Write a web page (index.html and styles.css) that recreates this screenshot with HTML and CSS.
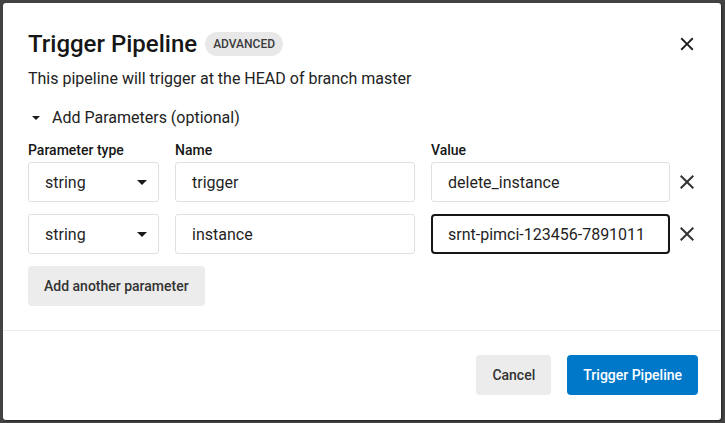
FILE: index.html
```html
<!DOCTYPE html>
<html lang="en">
<head>
<meta charset="utf-8">
<title>Trigger Pipeline</title>
<link rel="stylesheet" href="styles.css">
</head>
<body>
<div class="dialog">
  <div class="dialog-body">
    <div class="header">
      <div class="title-wrap">
        <h2 class="title">Trigger Pipeline</h2>
        <span class="badge">ADVANCED</span>
      </div>
      <button class="icon-btn close" aria-label="Close">
        <svg viewBox="0 0 24 24" width="22" height="22"><path d="M19 6.41 17.59 5 12 10.59 6.41 5 5 6.41 10.59 12 5 17.59 6.41 19 12 13.41 17.59 19 19 17.59 13.41 12z" fill="#1a1a1a"/></svg>
      </button>
    </div>
    <p class="subtitle">This pipeline will trigger at the HEAD of branch master</p>
    <div class="toggle">
      <svg class="caret" viewBox="7 10 10 5" width="8" height="4"><path d="M7 10l5 5 5-5z" fill="#1a1a1a"/></svg>
      <span>Add Parameters (optional)</span>
    </div>
    <div class="params">
      <div class="label">Parameter type</div>
      <div class="label">Name</div>
      <div class="label">Value</div>

      <div class="select">
        <span>string</span>
        <svg viewBox="0 0 24 24" width="24" height="24"><path d="M7 10l5 5 5-5z" fill="#1a1a1a"/></svg>
      </div>
      <div class="input">trigger</div>
      <div class="value-cell">
        <div class="input">delete_instance</div>
        <button class="icon-btn remove" aria-label="Remove">
          <svg viewBox="0 0 24 24" width="24" height="24"><path d="M19 6.41 17.59 5 12 10.59 6.41 5 5 6.41 10.59 12 5 17.59 6.41 19 12 13.41 17.59 19 19 17.59 13.41 12z" fill="#333"/></svg>
        </button>
      </div>

      <div class="select">
        <span>string</span>
        <svg viewBox="0 0 24 24" width="24" height="24"><path d="M7 10l5 5 5-5z" fill="#1a1a1a"/></svg>
      </div>
      <div class="input">instance</div>
      <div class="value-cell">
        <div class="input focused">srnt-pimci-123456-7891011</div>
        <button class="icon-btn remove" aria-label="Remove">
          <svg viewBox="0 0 24 24" width="24" height="24"><path d="M19 6.41 17.59 5 12 10.59 6.41 5 5 6.41 10.59 12 5 17.59 6.41 19 12 13.41 17.59 19 19 17.59 13.41 12z" fill="#333"/></svg>
        </button>
      </div>
    </div>
    <button class="btn btn-secondary add">Add another parameter</button>
  </div>
  <div class="footer">
    <button class="btn btn-secondary cancel">Cancel</button>
    <button class="btn btn-primary">Trigger Pipeline</button>
  </div>
</div>
</body>
</html>
```

FILE: styles.css
```css
* { box-sizing: border-box; }
html, body { margin: 0; height: 100%; }
body {
  background: #434343;
  padding: 3px 0 0 3px;
  font-family: Roboto, "Liberation Sans", sans-serif;
  color: #1a1a1a;
}
.dialog {
  width: 718px;
  height: 417px;
  background: #fff;
  border-radius: 3px;
  box-shadow: 1px 1px 2px rgba(0,0,0,0.5);
  display: flex;
  flex-direction: column;
}
.dialog-body {
  padding: 25px 22px 24px 25px;
  border-bottom: 1px solid #ececec;
}
.header {
  height: 32px;
  display: flex;
  align-items: center;
  justify-content: space-between;
}
.title-wrap {
  display: flex;
  align-items: center;
  gap: 8px;
}
.title {
  margin: 0;
  font-size: 24px;
  line-height: 32px;
  font-weight: 500;
  color: #161616;
}
.badge {
  height: 24px;
  line-height: 24px;
  padding: 0 8px;
  border-radius: 12px;
  background: #e8e8e8;
  color: #3b3b3b;
  font-size: 12px;
  font-weight: 500;
}
.icon-btn {
  border: 0;
  background: none;
  padding: 0;
  display: flex;
  align-items: center;
  justify-content: center;
  cursor: pointer;
}
.close { width: 22px; height: 22px; margin-right: 1px; }
.subtitle {
  margin: 7px 0 0;
  font-size: 16px;
  line-height: 24px;
  color: #222;
}
.toggle {
  margin-top: 14px;
  height: 24px;
  display: flex;
  align-items: center;
  font-size: 16px;
  color: #222;
}
.caret { margin: 2px 12px 0 4px; }
.params {
  margin-top: 11px;
  display: grid;
  grid-template-columns: 131px 240px 268px;
  column-gap: 16px;
  row-gap: 12px;
}
.label {
  font-size: 14px;
  line-height: 20px;
  font-weight: 500;
  color: #161616;
  margin-bottom: -10px;
}
.select, .input {
  height: 40px;
  border: 1px solid #e0e0e0;
  border-radius: 3px;
  font-size: 16px;
  color: #1f1f1f;
  display: flex;
  align-items: center;
  padding-left: 16px;
}
.select {
  justify-content: space-between;
  padding-right: 4px;
}
.input.focused {
  border: 2px solid #161616;
  border-radius: 4px;
  padding-left: 15px;
}
.value-cell {
  display: flex;
  align-items: center;
  gap: 5px;
}
.value-cell .input { width: 239px; }
.remove { width: 24px; height: 24px; }
.btn {
  height: 40px;
  border: 0;
  border-radius: 4px;
  font-family: inherit;
  font-size: 14px;
  font-weight: 500;
  padding: 0 16px;
  white-space: nowrap;
  cursor: pointer;
}
.btn-secondary { background: #ececec; color: #333; }
.btn-primary { background: #0078ca; color: #fff; }
.add { margin-top: 12px; display: block; }
.footer {
  display: flex;
  justify-content: flex-end;
  gap: 16px;
  padding: 24px 23px 25px 0;
}
.cancel { min-width: 75px; }
```
